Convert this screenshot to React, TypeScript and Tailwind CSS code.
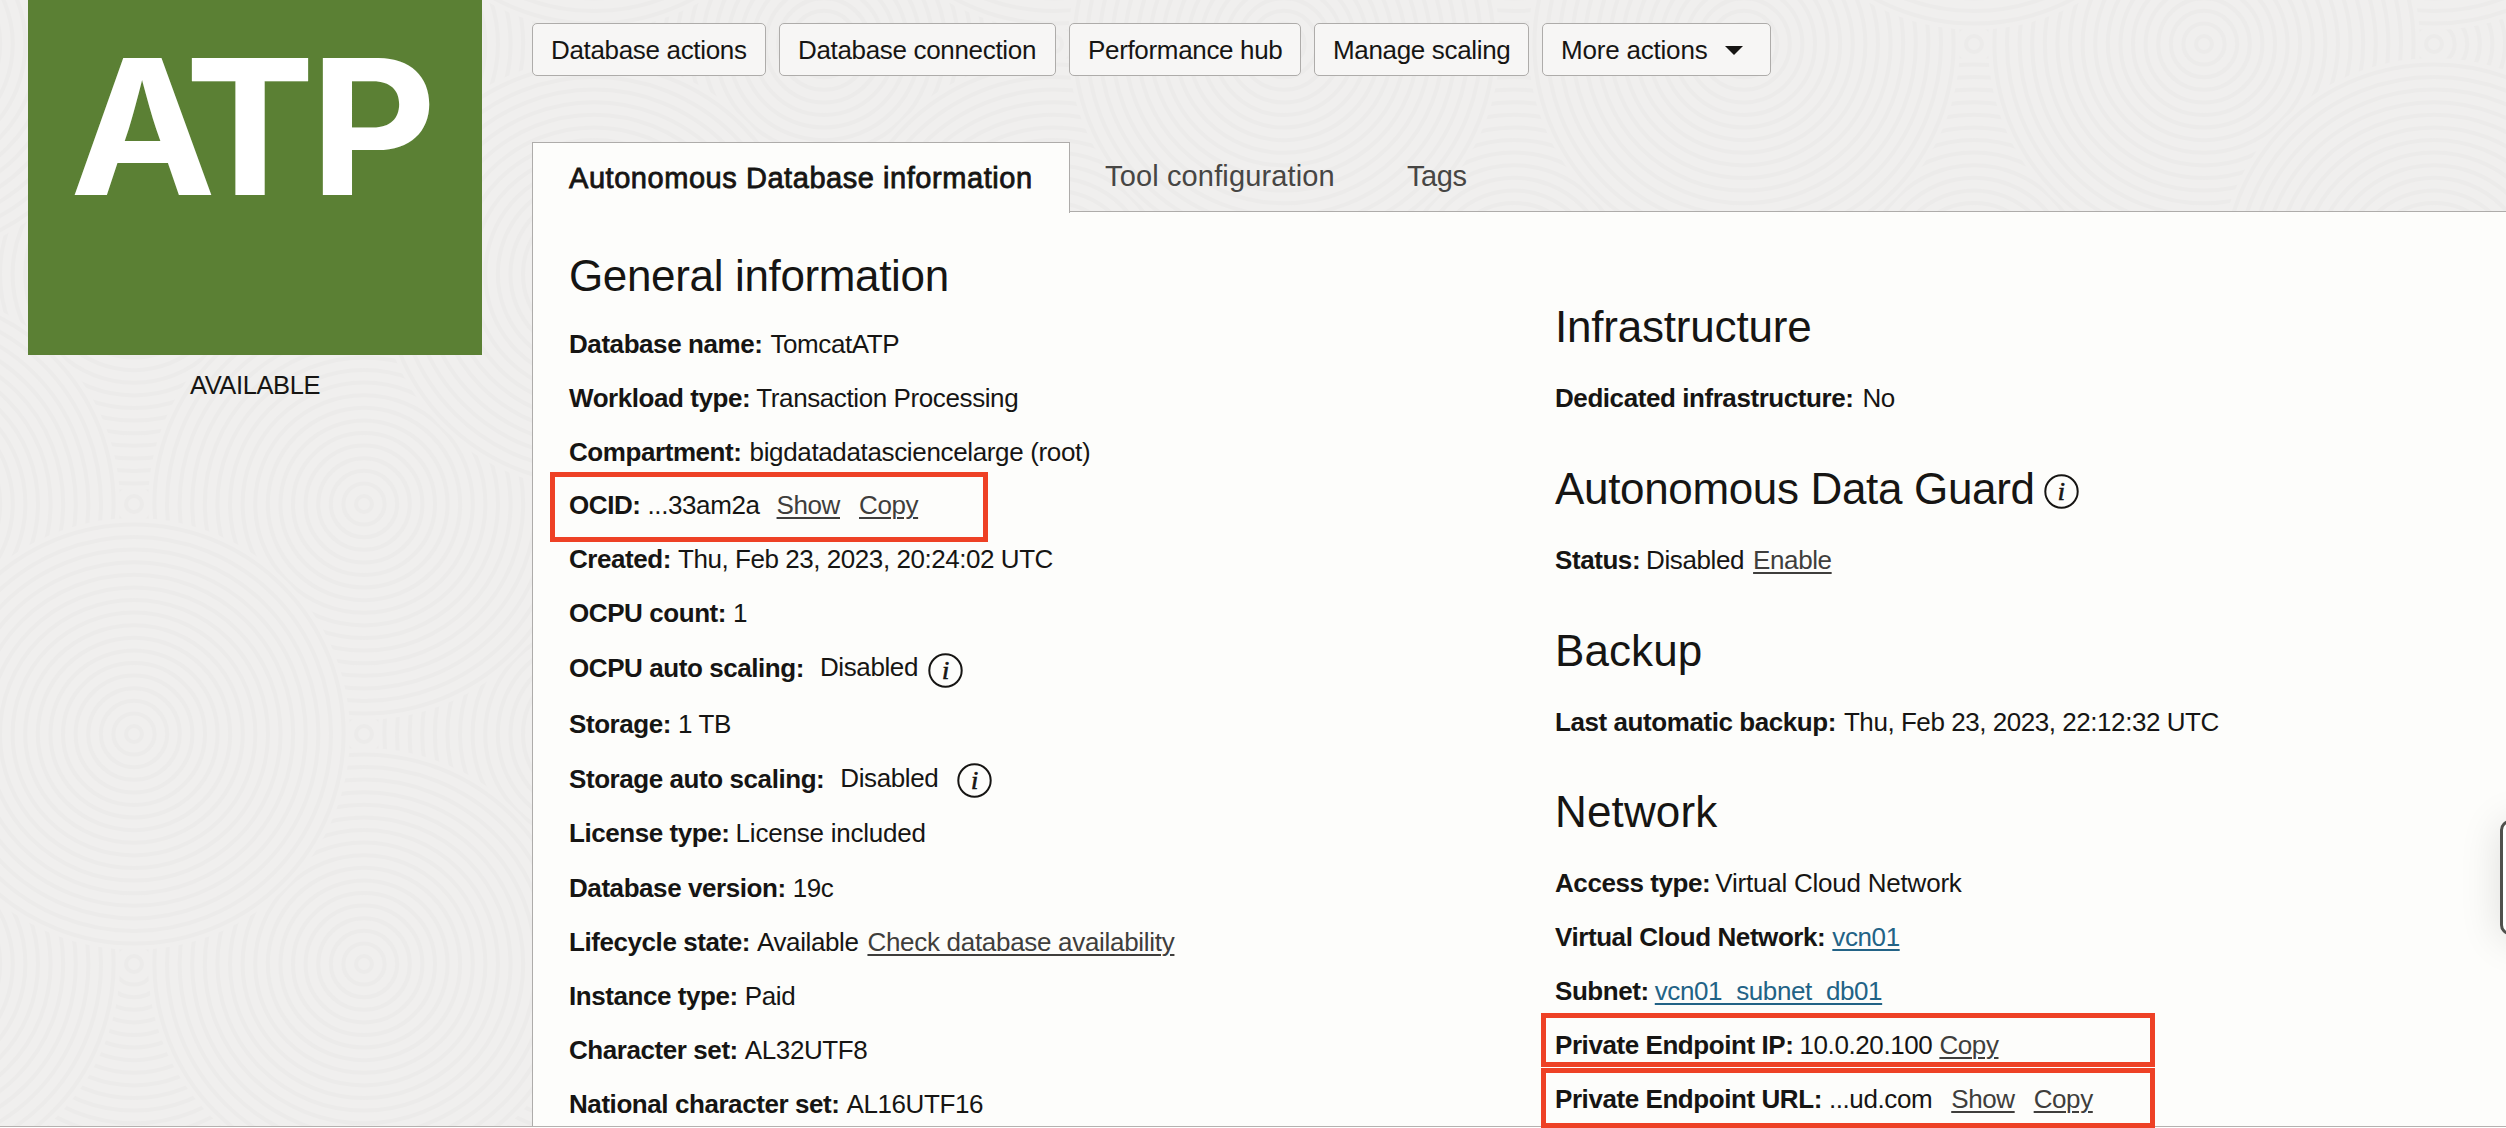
import type { ReactNode } from "react";

/* Overlapping discs of concentric rings, the page's embossed backdrop. */
const DISCS: [number, number, number][] = [];
for (let col = 0; col < 12; col++) {
  for (let row = 0; row < 6; row++) {
    const layer = (col + row) % 2 === 0 ? 0 : 20;
    DISCS.push([-96 + col * 230, -186 + row * 230, layer + ((col * 7 + row * 5 + col * row * 3) % 11)]);
  }
}
DISCS.sort((a, b) => a[2] - b[2]);
const RINGS = Array.from({ length: 17 }, (_, i) => 8 + i * 12.6);

function Backdrop() {
  return (
    <svg className="absolute inset-0" width="2506" height="1126" aria-hidden="true">
      {DISCS.map(([x, y]) => (
        <g key={x + "-" + y} transform={`translate(${x} ${y})`} fill="none" stroke="#ecebea" strokeWidth="4">
          <circle r="216" fill="#f0efee" stroke="none" />
          {RINGS.map((r) => (
            <circle key={r} r={r} />
          ))}
        </g>
      ))}
    </svg>
  );
}

function InfoIcon({ className = "" }: { className?: string }) {
  return (
    <svg className={"shrink-0 " + className} width="35" height="35" viewBox="0 0 35 35">
      <circle cx="17.5" cy="17.5" r="16.2" fill="none" stroke="#161513" strokeWidth="2" />
      <text
        x="17.3"
        y="25.5"
        textAnchor="middle"
        fontSize="26"
        fontStyle="italic"
        fontFamily="Liberation Serif, serif"
        fill="#161513"
        stroke="#161513"
        strokeWidth="0.7"
      >
        i
      </text>
    </svg>
  );
}

function ActionButton({ children, className }: { children: ReactNode; className: string }) {
  return (
    <button
      className={
        "flex h-[53px] items-center rounded-[5px] border border-[#aeacaa] bg-[#f7f6f5] pl-[18px] leading-[52px] tracking-[-0.33px] whitespace-nowrap " +
        className
      }
    >
      {children}
    </button>
  );
}

function Row({ label, children, h = "h-[54px]" }: { label: string; children: ReactNode; h?: string }) {
  return (
    <div className={"relative flex leading-[54px] whitespace-nowrap " + h}>
      <span className="mr-[7px] font-bold tracking-[-0.43px]">{label}</span>
      {children}
    </div>
  );
}

function Link({ children, className = "" }: { children: ReactNode; className?: string }) {
  return (
    <a className={"text-[#3f3e3c] underline decoration-2 underline-offset-[3px] " + className}>{children}</a>
  );
}

function BlueLink({ children }: { children: ReactNode }) {
  return <a className="text-[#226386] underline decoration-2 underline-offset-[3px]">{children}</a>;
}

function Heading({ children, className }: { children: ReactNode; className: string }) {
  return <h2 className={"flex h-[52px] text-[44px] leading-[52px] whitespace-nowrap " + className}>{children}</h2>;
}

function Highlight({ className }: { className: string }) {
  return <div className={"pointer-events-none absolute border-[5px] border-[#ee4125] " + className} />;
}

export default function App() {
  return (
    <div className="relative h-[1128px] w-full overflow-hidden bg-white font-['Liberation_Sans',Arial,sans-serif] text-[26px] tracking-[-0.4px] text-[#161513]">
      <div className="relative flex h-[1127px] border-b border-[#b5b1af] bg-[#f0efee]">
        <Backdrop />
        <aside className="relative w-[532px] shrink-0 pl-[28px]">
          <div className="flex h-[355px] w-[454px] bg-[#5b8034] pt-[33px] pl-[42px]">
            <span className="h-[188px] origin-left scale-x-[1.04] font-['Inter',sans-serif] text-[188px] leading-[188px] font-bold text-white">
              <span className="tracking-[-30px]">A</span>
              <span className="tracking-[-5px]">T</span>
              <span>P</span>
            </span>
          </div>
          <div className="w-[454px] pt-[15px] text-center text-[25.5px] leading-[30px] tracking-[-0.4px]">AVAILABLE</div>
        </aside>

        <main className="relative flex min-w-0 flex-1 flex-col">
          <div className="flex gap-[13px] pt-[23px]">
            <ActionButton className="w-[234px]">Database actions</ActionButton>
            <ActionButton className="w-[277px]">Database connection</ActionButton>
            <ActionButton className="w-[232px]">Performance hub</ActionButton>
            <ActionButton className="w-[215px]">Manage scaling</ActionButton>
            <ActionButton className="w-[229px]">
              <span className="tracking-[-0.2px]">More actions</span>
              <svg className="mt-px ml-[18px]" width="18" height="9" viewBox="0 0 18 9">
                <path d="M0 0H18L9 9Z" fill="#161513" />
              </svg>
            </ActionButton>
          </div>

          <div className="mt-[66px] flex h-[70px] text-[29px] whitespace-nowrap">
            <div className="relative z-10 h-[71px] w-[538px] border border-b-0 border-[#aeacaa] bg-[#fdfdfb] pl-[36px] leading-[71px] tracking-[0.55px] [-webkit-text-stroke:0.8px_#161513]">
              Autonomous Database information
            </div>
            <div className="flex flex-1 border-b border-[#aeacaa] pl-[35px] leading-[68px] tracking-[0.14px] text-[#474644]">
              <span className="w-[302px]">Tool configuration</span>
              <span className="tracking-[-0.4px]">Tags</span>
            </div>
          </div>

          <div className="flex flex-1 border-l border-[#aeacaa] bg-[#fdfdfb] pl-[36px]">
            <section className="w-[986px] shrink-0">
              <Heading className="mt-[38px] mb-[15px] tracking-[-0.35px]">General information</Heading>
              <Row label="Database name:"><span className="ml-px">TomcatATP</span></Row>
              <Row label="Workload type:"><span className="-ml-px">Transaction Processing</span></Row>
              <Row label="Compartment:" h="h-[53px]">
                <span className="ml-px tracking-[-0.35px]">bigdatadatasciencelarge (root)</span>
              </Row>
              <Row label="OCID:">
                ...33am2a
                <Link className="ml-[17px]">Show</Link>
                <Link className="ml-[19px]">Copy</Link>
                <Highlight className="-top-[6px] -left-[19px] h-[70px] w-[438px]" />
              </Row>
              <Row label="Created:">
                <span className="tracking-[-0.45px]">Thu, Feb 23, 2023, 20:24:02 UTC</span>
              </Row>
              <Row label="OCPU count:" h="h-[55px]">1</Row>
              <Row label="OCPU auto scaling:" h="h-[56px]">
                <span className="-mt-px ml-[9px]">Disabled</span>
                <InfoIcon className="mt-[12px] ml-[10px]" />
              </Row>
              <Row label="Storage:" h="h-[55px]">1 TB</Row>
              <Row label="Storage auto scaling:">
                <span className="-mt-px ml-[9px]">Disabled</span>
                <InfoIcon className="mt-[11px] ml-[19px]" />
              </Row>
              <Row label="License type:" h="h-[55px]">
                <span className="-ml-px tracking-[-0.22px]">License included</span>
              </Row>
              <Row label="Database version:">19c</Row>
              <Row label="Lifecycle state:">
                Available<Link className="ml-[9px] tracking-[-0.3px]">Check database availability</Link>
              </Row>
              <Row label="Instance type:">Paid</Row>
              <Row label="Character set:">AL32UTF8</Row>
              <Row label="National character set:" h="h-[49px]">AL16UTF16</Row>
            </section>

            <section className="flex-1">
              <Heading className="mt-[89px] mb-[18px] tracking-[-0.2px]">Infrastructure</Heading>
              <Row label="Dedicated infrastructure:"><span className="ml-[2px]">No</span></Row>
              <Heading className="mt-[38px] mb-[18px] tracking-[-0.34px]">
                Autonomous Data Guard
                <InfoIcon className="mt-[11px] ml-[9px]" />
              </Heading>
              <Row label="Status:">
                <span className="-ml-px">Disabled</span>
                <Link className="ml-[9px]">Enable</Link>
              </Row>
              <Heading className="mt-[38px] mb-[18px] tracking-[0.1px]">Backup</Heading>
              <Row label="Last automatic backup:">
                <span className="ml-px tracking-[-0.45px]">Thu, Feb 23, 2023, 22:12:32 UTC</span>
              </Row>
              <Heading className="mt-[37px] mb-[18px] tracking-[0.15px]">Network</Heading>
              <Row label="Access type:">
                <span className="-ml-[2px] tracking-[-0.22px]">Virtual Cloud Network</span>
              </Row>
              <Row label="Virtual Cloud Network:">
                <BlueLink>vcn01</BlueLink>
              </Row>
              <Row label="Subnet:">
                <span className="-ml-px"><BlueLink>vcn01_subnet_db01</BlueLink></span>
              </Row>
              <Row label="Private Endpoint IP:">
                <span className="-ml-px">10.0.20.100</span>
                <Link className="ml-[7px]">Copy</Link>
                <Highlight className="-top-[5px] -left-[14px] h-[54px] w-[614px]" />
              </Row>
              <Row label="Private Endpoint URL:" h="h-[49px]">
                ...ud.com
                <Link className="ml-[19px]">Show</Link>
                <Link className="ml-[19px]">Copy</Link>
                <Highlight className="-top-[4px] -left-[14px] h-[60px] w-[614px]" />
              </Row>
            </section>
          </div>
        </main>
      </div>
      <div className="absolute top-[820px] -right-[54px] h-[115px] w-[60px] rounded-[10px] border-[3px] border-[#50514d] bg-white shadow-[0_4px_40px_rgba(0,0,0,0.13)]" />
    </div>
  );
}
